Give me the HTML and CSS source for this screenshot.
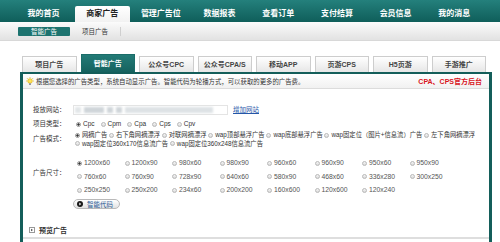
FILE: index.html
```html
<!DOCTYPE html>
<html>
<head>
	<meta charset='utf-8'/>
	<title>商家广告 - 智能广告</title>
	<link rel="stylesheet" href="styles.css">
</head>
<body>
	<div class="nav">
		<a href="javascript:;" class="nav_item">我的首页</a>
		<a href="javascript:;" class="nav_item on">商家广告</a>
		<a href="javascript:;" class="nav_item">管理广告位</a>
		<a href="javascript:;" class="nav_item">数据报表</a>
		<a href="javascript:;" class="nav_item">查看订单</a>
		<a href="javascript:;" class="nav_item">支付结算</a>
		<a href="javascript:;" class="nav_item">会员信息</a>
		<a href="javascript:;" class="nav_item">我的消息</a>
	</div>
	<div class="subnav">
		<a href="javascript:;" class="sub_item on">智能广告</a>
		<a href="javascript:;" class="sub_item">项目广告</a>
		<span class="sep"></span>
	</div>
	<div class="main">
		<ul class="tabs">
			<li>项目广告</li>
			<li class="on">智能广告</li>
			<li>公众号CPC</li>
			<li>公众号CPA/S</li>
			<li>移动APP</li>
			<li>页游CPS</li>
			<li>H5页游</li>
			<li>手游推广</li>
		</ul>
		<div class="panel">
			<div class="tip">
				<svg class="bulb" width="8" height="9" viewBox="0 0 8 9">
					<path d="M1 1.2L1.8 2M7 1.2L6.2 2M4 0V0.9M0 4H0.9M8 4H7.1" stroke="#e0b000" stroke-width="0.7"/>
					<circle cx="4" cy="4" r="2.3" fill="#ffe45c" stroke="#d6a600" stroke-width="0.6"/>
					<rect x="3" y="6.2" width="2" height="1.8" fill="#999"/>
				</svg>
				<span class="tip_text">根据您选择的广告类型，系统自动显示广告。智能代码为轮播方式，可以获取的更多的广告费。</span>
				<a href="javascript:;" class="tip_link">CPA、CPS官方后台</a>
			</div>
			<div class="form">
				<div class="row">
					<label>投放网站：</label>
					<div class="field">
						<span class="site"><i class="b1"></i><i class="b2"></i><i class="b3"></i><i class="b4"></i><i class="b5"></i></span>
						<a href="javascript:;" class="add">增加网站</a>
					</div>
				</div>
				<div class="row">
					<label>项目类型：</label>
					<div class="field types">
						<span class="opt"><i class="radio on"></i>Cpc</span>
						<span class="opt"><i class="radio"></i>Cpm</span>
						<span class="opt"><i class="radio"></i>Cpa</span>
						<span class="opt"><i class="radio"></i>Cps</span>
						<span class="opt"><i class="radio"></i>Cpv</span>
					</div>
				</div>
				<div class="row mode_row">
					<label>广告模式：</label>
					<div class="field modes"><i class="radio on"></i>网摘广告 <i class="radio"></i>右下角网摘漂浮 <i class="radio"></i>对联网摘漂浮 <i class="radio"></i>wap顶部悬浮广告 <i class="radio"></i>wap底部悬浮广告 <i class="radio"></i>wap固定位（图片+信息流）广告 <i class="radio"></i>左下角网摘漂浮 <i class="radio"></i>wap固定位360x170信息流广告 <i class="radio"></i>wap固定位360x248信息流广告</div>
				</div>
				<div class="row size_row">
					<label>广告尺寸：</label>
					<div class="field sizes">
						<span><i class="radio on"></i>1200x60</span>
						<span><i class="radio"></i>1200x90</span>
						<span><i class="radio"></i>980x60</span>
						<span><i class="radio"></i>980x90</span>
						<span><i class="radio"></i>960x60</span>
						<span><i class="radio"></i>960x90</span>
						<span><i class="radio"></i>950x60</span>
						<span><i class="radio"></i>950x90</span>
						<span><i class="radio"></i>760x60</span>
						<span><i class="radio"></i>760x90</span>
						<span><i class="radio"></i>728x90</span>
						<span><i class="radio"></i>640x60</span>
						<span><i class="radio"></i>580x90</span>
						<span><i class="radio"></i>468x60</span>
						<span><i class="radio"></i>336x280</span>
						<span><i class="radio"></i>300x250</span>
						<span><i class="radio"></i>250x250</span>
						<span><i class="radio"></i>250x200</span>
						<span><i class="radio"></i>234x60</span>
						<span><i class="radio"></i>200x200</span>
						<span><i class="radio"></i>160x600</span>
						<span><i class="radio"></i>120x600</span>
						<span><i class="radio"></i>120x240</span>
					</div>
				</div>
				<div class="btn_row">
					<a href="javascript:;" class="btn">
						<svg width="6" height="6" viewBox="0 0 6 6"><circle cx="3" cy="3" r="3" fill="#1a1a1a"/><path d="M2.3 1.6L4.2 3L2.3 4.4Z" fill="#fff"/></svg>
						<span>智能代码</span>
					</a>
				</div>
			</div>
			<div class="preview">
				<svg width="6" height="6" viewBox="0 0 6 6"><rect x="0.5" y="0.5" width="5" height="5" fill="#fff" stroke="#999"/><path d="M2.2 1.7L3.9 3L2.2 4.3Z" fill="#333"/></svg>
				<span>预览广告</span>
			</div>
		</div>
	</div>
</body>
</html>
```
FILE: styles.css
```css
*{
	margin: 0;
	padding: 0;
}
a{
	text-decoration: none;
	color: inherit;
}
ul,li{
	list-style: none;
}
body{
	width: 500px;
	height: 242px;
	overflow: hidden;
	background: #fff;
	color: #333;
	font-family: "Liberation Sans", "Noto Sans CJK SC", sans-serif;
	font-size: 6.5px;
}
.nav{
	height: 22px;
	display: flex;
	align-items: flex-end;
	gap: 3.7px;
	padding-left: 16px;
	background: linear-gradient(#24807c, #0f5e5a);
}
.nav_item{
	width: 55px;
	height: 16px;
	line-height: 16px;
	text-align: center;
	color: #fff;
	font-size: 8px;
	font-weight: bold;
}
.nav_item.on{
	color: #222;
	background: linear-gradient(#fff, #f2f2f2);
	border-radius: 2px 2px 0 0;
}
.subnav{
	height: 19px;
	display: flex;
	align-items: center;
	padding-left: 18px;
	background: linear-gradient(#fbfbfb, #e2e2e2);
	border-bottom: 1px solid #d8d8d8;
	box-sizing: border-box;
}
.sub_item{
	padding: 0 12px;
	line-height: 9px;
	color: #333;
}
.sub_item.on{
	width: 52px;
	padding: 0;
	text-align: center;
	color: #fff;
	background: #1d736f;
	border-radius: 1px;
}
.subnav .sep{
	width: 1px;
	height: 9px;
	background: #cfcfcf;
}
.main{
	padding-top: 13px;
}
.tabs{
	height: 18px;
	display: flex;
	align-items: flex-end;
	gap: 4px;
	padding-left: 22px;
}
.tabs li{
	width: 54.5px;
	height: 16px;
	line-height: 16px;
	box-sizing: border-box;
	text-align: center;
	font-size: 7px;
	font-weight: bold;
	color: #444;
	border: 1px solid #cdcdcd;
	border-bottom: none;
	background: linear-gradient(#fff, #e6e6e6);
}
.tabs li.on{
	height: 18px;
	line-height: 18px;
	color: #fff;
	border-color: #1b6d69;
	background: linear-gradient(#237b77, #16625e);
}
.panel{
	margin-left: 20px;
	width: 472px;
	height: 200px;
	box-sizing: border-box;
	border: solid #145e5a;
	border-width: 2px 3px 0 3px;
}
.tip{
	height: 15px;
	display: flex;
	align-items: center;
	padding: 0 7px 0 3px;
	background: linear-gradient(#fff, #f1f1f1);
	border-bottom: 1px solid #dcdcdc;
	box-sizing: border-box;
}
.bulb{
	margin-right: 2px;
}
.tip_text{
	font-size: 6.4px;
	flex: 1;
}
.tip_link{
	color: #d8131c;
	font-size: 7px;
	font-weight: bold;
}
.form{
	padding-top: 14px;
}
.row{
	display: flex;
	line-height: 14px;
}
.row label{
	width: 40px;
	padding-left: 10px;
	flex: none;
}
.field{
	display: flex;
	align-items: center;
}
.site{
	width: 155px;
	height: 10px;
	box-sizing: border-box;
	border: 1px solid #e4e4e4;
	display: flex;
	align-items: center;
	gap: 3px;
	padding-left: 1px;
}
.site i{
	height: 6px;
	background: #cfd5d9;
	filter: blur(1px);
}
.site .b1{ width: 6px; background: #e2e6e8; }
.site .b2{ width: 20px; }
.site .b3{ width: 6px; }
.site .b4{ width: 6px; }
.site .b5{ width: 88px; background: #dde2e5; }
.add{
	margin-left: 5px;
	color: #2556a8;
	text-decoration: underline;
}
.radio{
	display: inline-block;
	width: 5px;
	height: 5px;
	box-sizing: border-box;
	border: 1px solid #b8b8b8;
	border-radius: 50%;
	background: linear-gradient(#f6f6f6, #d9d9d9);
	vertical-align: -0.5px;
	margin-right: 2px;
}
.radio.on{
	border-color: #999;
	background: radial-gradient(circle, #333 0.9px, #eee 1.3px);
}
.types{
	gap: 6px;
	padding-left: 3px;
}
.mode_row{
	align-items: center;
	line-height: 8.5px;
}
.modes{
	display: block;
	width: 402px;
	padding-left: 2px;
	font-size: 6.3px;
}
.size_row{
	margin-top: 8.5px;
}
.size_row label{
	padding-top: 9px;
}
.sizes{
	display: grid;
	grid-template-columns: repeat(8, 47.5px);
	grid-auto-rows: 13.5px;
	align-items: center;
	padding-left: 4px;
	color: #555;
	font-size: 6.8px;
}
.btn_row{
	margin-top: 2px;
	padding-left: 50px;
}
.btn{
	width: 47px;
	height: 10px;
	box-sizing: border-box;
	display: flex;
	align-items: center;
	gap: 4px;
	padding-left: 3px;
	border: 1px solid #b9b9b9;
	border-radius: 5px;
	background: linear-gradient(#fff, #e2e2e2);
	color: #2d5d97;
}
.preview{
	margin-top: 15px;
	height: 12px;
	display: flex;
	align-items: center;
	gap: 4px;
	padding-left: 6px;
	font-size: 7px;
	font-weight: bold;
	border-bottom: 2px solid #dedede;
	padding-bottom: 1px;
}
```
